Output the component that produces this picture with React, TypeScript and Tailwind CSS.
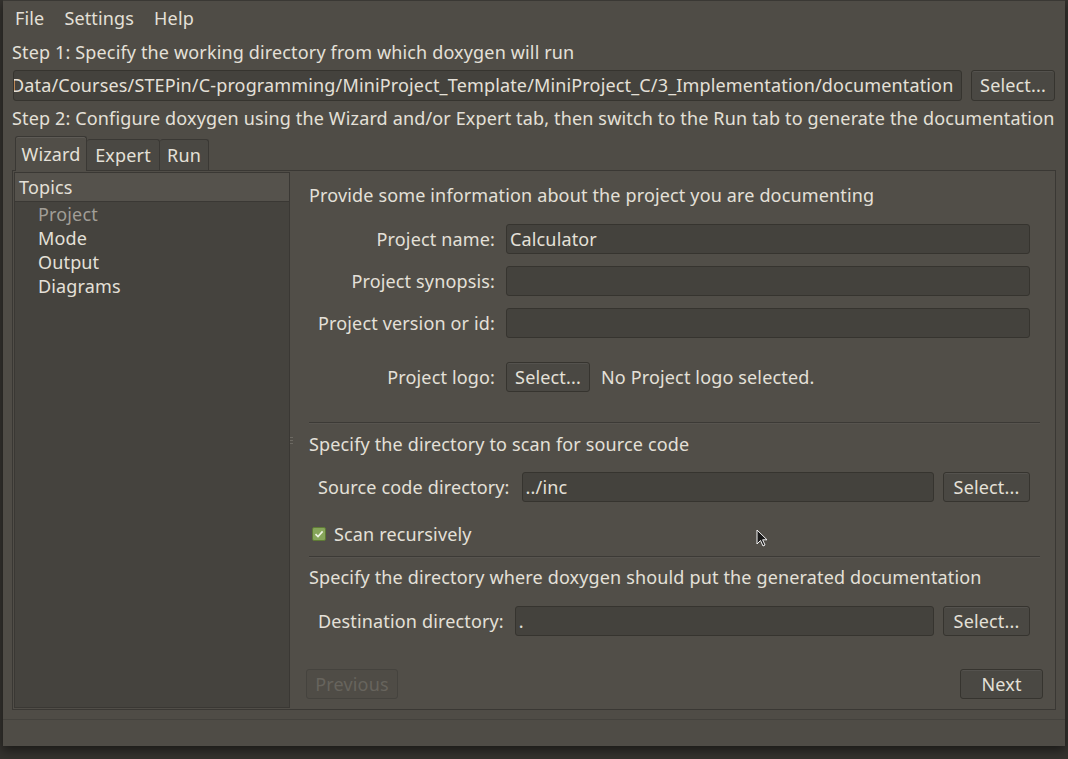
import React from 'react'

const font = { fontFamily: '"Noto Sans", "Open Sans", sans-serif' }

function Field({ value, className = '' }: { value?: string; className?: string }) {
  return (
    <div
      className={`flex h-[30px] items-center overflow-hidden whitespace-nowrap rounded-[3px] border border-[#36342f] bg-[#44423d] px-[3px] text-[#e4e0d8] ${className}`}
    >
      {value}
    </div>
  )
}

function Btn({ children, className = '', disabled }: { children: React.ReactNode; className?: string; disabled?: boolean }) {
  return (
    <div
      className={`flex h-[30px] items-center justify-center rounded-[3px] border ${
        disabled
          ? 'border-[#45433e] bg-[#4f4c46] text-[#67645d]'
          : 'border-[#36342f] bg-[#4a4843] text-[#e4e0d8] shadow-[inset_0_1px_0_rgba(255,255,255,0.06)]'
      } ${className}`}
    >
      {children}
    </div>
  )
}

function Row({ label, children, className = '' }: { label: string; children: React.ReactNode; className?: string }) {
  return (
    <div className={`flex items-center ${className}`}>
      <div className="w-[186px] shrink-0 whitespace-nowrap text-right">{label}</div>
      <div className="ml-[11px] flex flex-1 items-center">{children}</div>
    </div>
  )
}

export default function App() {
  return (
    <div
      className="h-[759px] w-[1068px] overflow-hidden bg-[#34322e] text-[18px] tracking-[0.15px] text-[#e4e0d8]"
      style={font}
    >
      <div className="relative ml-[3px] flex h-[746px] w-[1062px] flex-col border-t border-[#3a3834] bg-[#4f4c46] shadow-[0_4px_10px_rgba(0,0,0,0.5)]">
        {/* Menu */}
        <div className="flex h-[34px] items-center gap-[20px] pl-[12px]">
          <span>File</span>
          <span>Settings</span>
          <span>Help</span>
        </div>

        {/* Step 1 */}
        <div className="flex h-[35px] items-center whitespace-nowrap pl-[9px]">
          Step 1: Specify the working directory from which doxygen will run
        </div>
        <div className="flex h-[31px] items-stretch gap-[9px] pl-[10px] pr-[10px]">
          <div className="flex min-w-0 flex-1 items-center overflow-hidden whitespace-nowrap rounded-[3px] border border-[#36342f] bg-[#44423d]">
            <span className="-ml-[3px] shrink-0">Data/Courses/STEPin/C-programming/MiniProject_Template/MiniProject_C/3_Implementation/documentation</span>
          </div>
          <Btn className="w-[84px] shrink-0 !h-[31px]">Select...</Btn>
        </div>
        <div className="flex h-[35px] items-center whitespace-nowrap pl-[9px]">
          Step 2: Configure doxygen using the Wizard and/or Expert tab, then switch to the Run tab to generate the documentation
        </div>

        {/* Tabs */}
        <div className="flex h-[34px] items-end pl-[12px]">
          <div className="z-10 -mb-px flex h-[35px] w-[72px] items-center justify-center rounded-t-[3px] border border-b-0 border-[#3a3834] bg-[#514e48] shadow-[inset_0_1px_0_rgba(255,255,255,0.08)]">
            Wizard
          </div>
          <div className="flex h-[31px] w-[73px] items-center justify-center rounded-t-[3px] border border-b-0 border-l-0 border-[#3a3834] bg-[#4a4843]">
            Expert
          </div>
          <div className="flex h-[31px] w-[49px] items-center justify-center rounded-t-[3px] border border-b-0 border-l-0 border-[#3a3834] bg-[#4a4843]">
            Run
          </div>
        </div>

        {/* Pane */}
        <div className="mx-[9px] flex h-[540px] border border-[#3a3834] bg-[#514e48] p-px">
          {/* Tree */}
          <div className="flex w-[276px] shrink-0 flex-col border border-[#3a3834] bg-[#45433e]">
            <div className="flex h-[29px] items-center border-b border-[#3a3834] bg-[#55524c] pl-[4px]">Topics</div>
            <div className="flex flex-col pl-[23px]">
              <div className="flex h-[24px] items-center text-[#a19e97]">Project</div>
              <div className="flex h-[24px] items-center">Mode</div>
              <div className="flex h-[24px] items-center">Output</div>
              <div className="flex h-[24px] items-center">Diagrams</div>
            </div>
          </div>

          {/* Splitter */}
          <div className="flex w-[3px] flex-col items-center justify-center gap-[2px]">
            <div className="h-px w-[3px] bg-[#6c6962]" />
            <div className="h-px w-[3px] bg-[#6c6962]" />
            <div className="h-px w-[3px] bg-[#6c6962]" />
          </div>

          {/* Right */}
          <div className="flex flex-1 flex-col pl-[16px] pr-[14px]">
            <div className="mt-[10px] flex h-[26px] items-center whitespace-nowrap">
              Provide some information about the project you are documenting
            </div>
            <div className="pr-[10px]">
              <Row label="Project name:" className="mt-[16px]">
                <Field value="Calculator" className="flex-1" />
              </Row>
              <Row label="Project synopsis:" className="mt-[12px]">
                <Field className="flex-1" />
              </Row>
              <Row label="Project version or id:" className="mt-[12px]">
                <Field className="flex-1" />
              </Row>
              <Row label="Project logo:" className="mt-[24px]">
                <Btn className="w-[84px]">Select...</Btn>
                <span className="ml-[11px]">No Project logo selected.</span>
              </Row>
            </div>
            <div className="mt-[30px] h-px bg-[#3c3a36] shadow-[0_1px_0_rgba(255,255,255,0.04)]" />
            <div className="mt-[8px] flex h-[26px] items-center">Specify the directory to scan for source code</div>
            <div className="mt-[15px] flex items-center pl-[9px] pr-[10px]">
              <span className="whitespace-nowrap">Source code directory:</span>
              <Field value="../inc" className="ml-[12px] flex-1" />
              <Btn className="ml-[9px] w-[87px]">Select...</Btn>
            </div>
            <div className="mt-[20px] flex h-[24px] items-center pl-[3px]">
              <div className="flex h-[14px] w-[14px] items-center justify-center rounded-[2px] border border-[#5e7a35] bg-[#86a55a]">
                <svg width="10" height="10" viewBox="0 0 10 10">
                  <path d="M1.5 5.2 L4 7.6 L8.6 2.4" stroke="#eef3e4" strokeWidth="1.6" fill="none" />
                </svg>
              </div>
              <span className="ml-[8px]">Scan recursively</span>
            </div>
            <div className="mt-[10px] h-px bg-[#3c3a36] shadow-[0_1px_0_rgba(255,255,255,0.04)]" />
            <div className="mt-[7px] flex h-[26px] items-center whitespace-nowrap">
              Specify the directory where doxygen should put the generated documentation
            </div>
            <div className="mt-[16px] flex items-center pl-[9px] pr-[10px]">
              <span className="whitespace-nowrap">Destination directory:</span>
              <Field value="." className="ml-[11px] flex-1" />
              <Btn className="ml-[9px] w-[87px]">Select...</Btn>
            </div>
            <div className="mt-[33px] flex items-center justify-between">
              <Btn disabled className="-ml-[3px] w-[92px]">Previous</Btn>
              <Btn className="mr-[-3px] w-[83px]">Next</Btn>
            </div>
          </div>
        </div>

        {/* Status bar */}
        <div className="mt-[9px] flex-1 border-t border-[#44423d] bg-[#4f4c46]" />

        {/* Mouse cursor */}
        <svg className="absolute left-[753px] top-[528px]" width="12" height="19" viewBox="0 0 12 19">
          <path d="M1 1 L1 15 L4.5 11.5 L7 17 L9 16 L6.6 10.8 L11 10.8 Z" fill="#1a1a1a" stroke="#f2f2f2" strokeWidth="1" />
        </svg>
      </div>
    </div>
  )
}
